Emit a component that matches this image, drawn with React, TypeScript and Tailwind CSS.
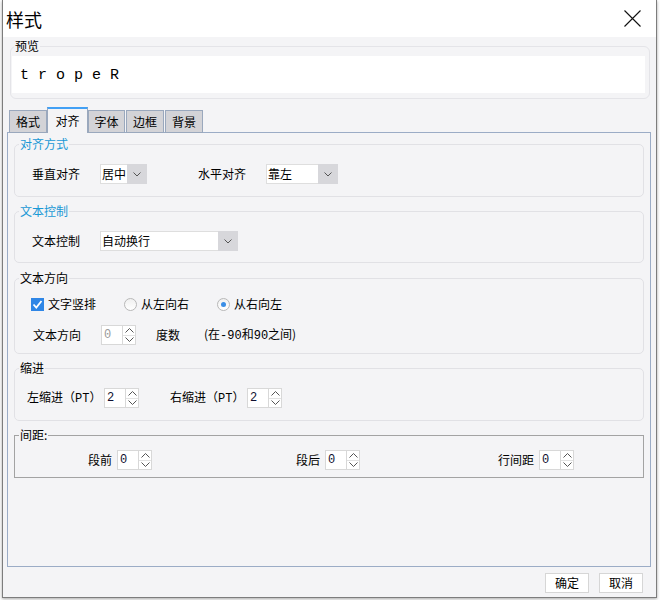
import { useState } from "react";

const cjk = "font-['Noto_Sans_CJK_SC','Noto_Sans',sans-serif]";
const mono = "font-['Liberation_Mono','Noto_Sans_CJK_SC',monospace]";

function Chevron({ up }: { up?: boolean }) {
  return (
    <svg width="9" height="5" viewBox="0 0 9 5" className="block">
      <path
        d={up ? "M0.5 4.5 L4.5 0.5 L8.5 4.5" : "M0.5 0.5 L4.5 4.5 L8.5 0.5"}
        fill="none"
        stroke="#555"
        strokeWidth="1"
      />
    </svg>
  );
}

function Spin({
  value,
  disabled,
  fieldW = 22,
}: {
  value: string;
  disabled?: boolean;
  fieldW?: number;
}) {
  return (
    <div className="flex h-[20px]">
      <div
        className={`flex items-center bg-white border border-[#d8d8d8] pl-[2px] text-[12px] ${mono} ${
          disabled ? "text-[#9a9a9a] border-[#cfcabd]" : "text-[#101030]"
        }`}
        style={{ width: fieldW }}
      >
        {value}
      </div>
      <div className="w-[13px] flex flex-col border border-l-0 border-[#d8d8d8] bg-white">
        <div className="flex-1 flex items-center justify-center border-b border-[#e2e2e2]">
          <Chevron up />
        </div>
        <div className="flex-1 flex items-center justify-center">
          <Chevron />
        </div>
      </div>
    </div>
  );
}

function Select({ value, w }: { value: string; w: number }) {
  return (
    <div className="flex h-[20px]" style={{ width: w }}>
      <div className="flex-1 flex items-center bg-white border border-[#dedede] border-r-0 pl-[1px] text-[12px] text-black">
        {value}
      </div>
      <div className="w-[20px] flex items-center justify-center bg-[#d7d7db]">
        <svg width="8" height="5" viewBox="0 0 8 5">
          <path d="M0.5 0.5 L4 4 L7.5 0.5" fill="none" stroke="#555" strokeWidth="1" />
        </svg>
      </div>
    </div>
  );
}

function Radio({ checked }: { checked?: boolean }) {
  return (
    <span className="w-[13px] h-[13px] rounded-full border border-[#b8b8b8] bg-gradient-to-b from-[#f0f0f0] to-[#ffffff] flex items-center justify-center">
      {checked && <span className="w-[5px] h-[5px] rounded-full bg-[#3a8ee6]" />}
    </span>
  );
}

function Group({
  title,
  blue,
  mt,
  children,
  className = "",
}: {
  title: string;
  blue?: boolean;
  mt: string;
  children: React.ReactNode;
  className?: string;
}) {
  return (
    <fieldset
      className={`mx-[6px] rounded-[5px] border border-[#e1e1e5] ${mt} ${className}`}
    >
      <legend
        className={`ml-[4px] px-[1px] text-[12px] leading-[14px] ${
          blue ? "text-[#1a98d5]" : "text-black"
        }`}
      >
        {title}
      </legend>
      {children}
    </fieldset>
  );
}

export default function App() {
  const [tab] = useState("对齐");
  const tabs = [
    { name: "格式", w: "w-[38px]", ml: "" },
    { name: "对齐", w: "w-[41px]", ml: "" },
    { name: "字体", w: "w-[37px]", ml: "" },
    { name: "边框", w: "w-[38px]", ml: "ml-[1px]" },
    { name: "背景", w: "w-[38px]", ml: "ml-[1px]" },
  ];

  return (
    <div className={`w-[660px] h-[600px] bg-white overflow-hidden ${cjk}`}>
      <div className="ml-[2px] w-[655px] h-[598px] border-x border-b border-[#7d7d7d] bg-[#f4f4f6] flex flex-col shadow-[0_1px_3px_rgba(0,0,0,0.35)]">
        {/* title bar */}
        <div className="h-[37px] bg-white flex items-center justify-between pl-[3px] pr-[15px]">
          <span className="text-[18px] leading-[24px] text-black">样式</span>
          <svg width="17" height="17" viewBox="0 0 17 17">
            <path d="M0.5 0.5 L16.5 16.5 M16.5 0.5 L0.5 16.5" stroke="#111" strokeWidth="1.1" />
          </svg>
        </div>

        {/* preview */}
        <fieldset className="mt-[1px] ml-[7px] mr-[6px] rounded-[6px] border border-[#e4e4e8] pl-[1px] pr-[4px] pt-[2px] pb-[5px]">
          <legend className="ml-[2px] pl-[1px] pr-[1px] text-[12px] leading-[16px] text-black">
            预览
          </legend>
          <div className={`h-[37px] bg-white flex items-center pl-[8px] pt-[4px] text-[15px] text-black ${mono}`}>
            t r o p e R
          </div>
        </fieldset>

        {/* tabs */}
        <div className="mt-[8px] ml-[6px] h-[26px] -mb-px flex items-end relative z-10">
          {tabs.map((t) => {
            const active = t.name === tab;
            return (
              <div
                key={t.name}
                className={`${t.w} ${t.ml} flex items-center justify-center text-[12px] text-black ${
                  active
                    ? "h-[26px] bg-[#f4f4f6] border-x border-[#9aa8bd] border-t-[2px] border-t-[#42a0f5]"
                    : "h-[23px] bg-[#d3d3d7] border border-[#9aa8bd]"
                }`}
              >
                {t.name}
              </div>
            );
          })}
        </div>

        {/* panel */}
        <div className="ml-[4px] w-[644px] h-[435px] border border-[#9bacc6] flex flex-col">
          <Group title="对齐方式" blue mt="mt-[4px]" className="pt-[13px] pb-[12px]">
            <div className="flex items-center h-[20px] text-[12px]">
              <span className="ml-[17px] w-[68px]">垂直对齐</span>
              <Select value="居中" w={47} />
              <span className="ml-[51px] w-[68px]">水平对齐</span>
              <Select value="靠左" w={72} />
            </div>
          </Group>

          <Group title="文本控制" blue mt="mt-[7px]" className="pt-[13px] pb-[11px]">
            <div className="flex items-center h-[20px] text-[12px]">
              <span className="ml-[17px] w-[68px]">文本控制</span>
              <Select value=" 自动换行" w={138} />
            </div>
          </Group>

          <Group title="文本方向" mt="mt-[8px]" className="pt-[11px] pb-[8px]">
            <div className="flex items-center h-[16px] text-[12px]">
              <span className="ml-[16px] w-[13px] h-[13px] bg-[#2f86e6] flex items-center justify-center">
                <svg width="11" height="11" viewBox="0 0 11 11">
                  <path d="M1.5 5.5 L4.3 8.5 L9.5 2" fill="none" stroke="#fff" strokeWidth="1.8" />
                </svg>
              </span>
              <span className="ml-[4px] w-[76px]">文字竖排</span>
              <Radio />
              <span className="ml-[4px] w-[76px]">从左向右</span>
              <Radio checked />
              <span className="ml-[4px]">从右向左</span>
            </div>
            <div className="mt-[13px] flex items-center h-[20px] text-[12px]">
              <span className="ml-[18px] w-[68px]">文本方向</span>
              <Spin value="0" disabled />
              <span className="ml-[20px] w-[48px]">度数</span>
              <span>
                (在<span className={mono}>-90</span>和<span className={mono}>90</span>之间)
              </span>
            </div>
          </Group>

          <Group title="缩进" mt="mt-[7px]" className="pt-[13px] pb-[12px]">
            <div className="flex items-center h-[20px] text-[12px]">
              <span className="ml-[12px] w-[77px]">
                左缩进（<span className={mono}>PT</span>）
              </span>
              <Spin value="2" />
              <span className="ml-[31px] w-[77px]">
                右缩进（<span className={mono}>PT</span>）
              </span>
              <Spin value="2" />
            </div>
          </Group>

          <fieldset className="mt-[7px] mx-[6px] border border-[#a3a3a3] pt-[8px] pb-[7px]">
            <legend className="ml-[4px] px-[1px] text-[12px] leading-[14px] text-black">间距:</legend>
            <div className="flex items-center h-[20px] text-[12px]">
              <span className="ml-[73px] w-[29px]">段前</span>
              <Spin value="0" />
              <span className="ml-[144px] w-[29px]">段后</span>
              <Spin value="0" />
              <span className="ml-[138px] w-[41px]">行间距</span>
              <Spin value="0" />
            </div>
          </fieldset>
        </div>

        {/* buttons */}
        <div className="mt-[6px] mr-[13px] flex justify-end gap-[10px]">
          <button className="w-[44px] h-[20px] bg-white border border-[#d6d6d6] text-[12px] text-black">
            确定
          </button>
          <button className="w-[44px] h-[20px] bg-white border border-[#d6d6d6] text-[12px] text-black">
            取消
          </button>
        </div>
      </div>
    </div>
  );
}
